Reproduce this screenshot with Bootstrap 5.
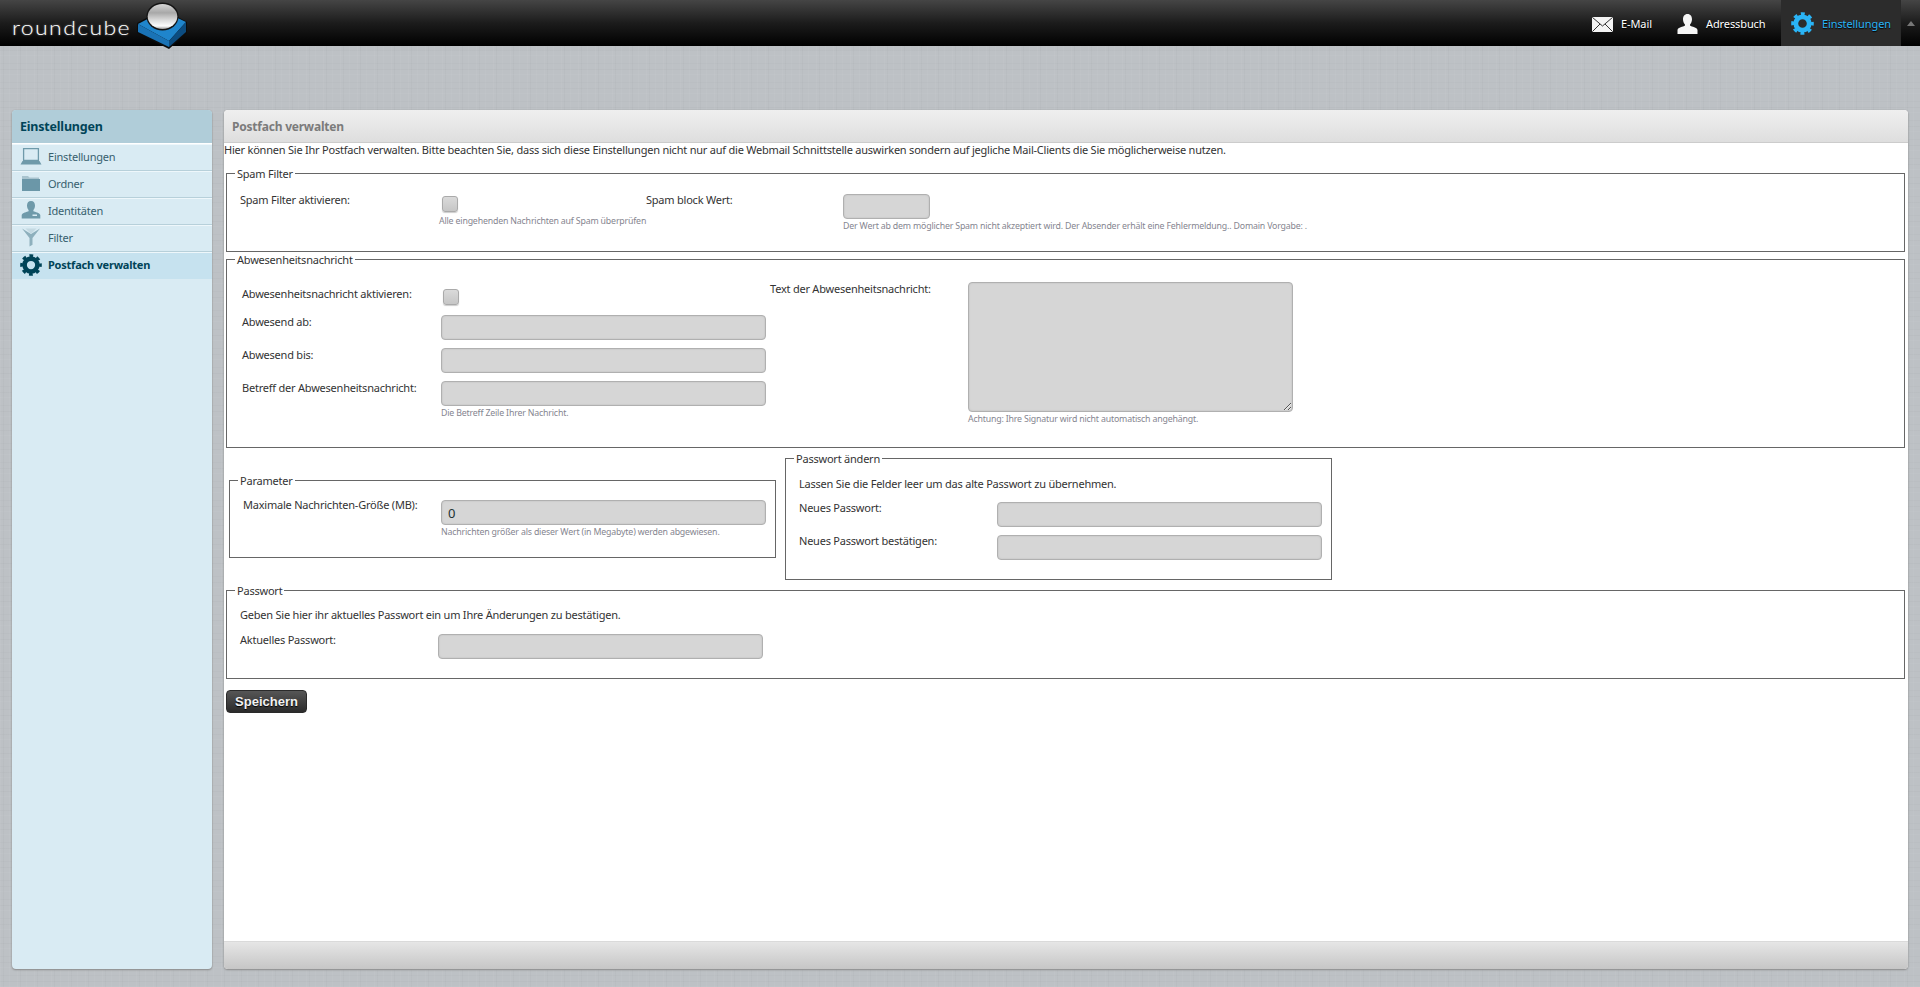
<!DOCTYPE html>
<html lang="de">
<head>
  <meta charset="UTF-8" />
  <meta name="viewport" content="width=device-width, initial-scale=1.0"/>
  <title>Roundcube - Postfach verwalten</title>
  <link href="https://cdn.jsdelivr.net/npm/bootstrap@5.3.0/dist/css/bootstrap.min.css" rel="stylesheet"/>
  <style>
    html, body { height: 100%; }
    body {
      font-family: "Noto Sans", "Open Sans", sans-serif; font-size: 11px; letter-spacing: -.22px; line-height: 15px; color: #333; overflow: hidden;
      background-color: #bdc1c5;
      background-image:
        repeating-linear-gradient(90deg, rgba(255,255,255,.04) 0 1px, transparent 1px 3px, rgba(0,0,0,.02) 3px 4px, transparent 4px 9px, rgba(255,255,255,.03) 9px 10px, transparent 10px 17px),
        repeating-linear-gradient(0deg, rgba(255,255,255,.035) 0 1px, transparent 1px 5px, rgba(0,0,0,.02) 5px 6px, transparent 6px 11px, rgba(0,0,0,.015) 11px 12px, transparent 12px 19px);
    }
    .topbar { height: 46px; background: linear-gradient(#454545, #1c1c1c 50%, #000); }
    .brand { padding-left: 12px; height: 46px; }
    .brand-text { font-family: Lato, sans-serif; font-weight: 300; font-size: 20px; letter-spacing: 1.2px; color: #fff; line-height: 46px; width: 125px; padding-top: 4px; transform: scaleX(1.15); transform-origin: left center; text-shadow: 0 0 2px rgba(255,255,255,.5); }
    .brand-cube { width: 50px; height: 50px; position: relative; z-index: 2; }
    .top-link { height: 46px; padding-top: 1px; color: #fff; letter-spacing: -.1px; line-height: 46px; text-decoration: none; text-shadow: 0 1px 1px #000; }
    .top-link svg { flex: none; }
    .link-mail { width: 85px; gap: 8px; }
    .link-mail svg { margin-top: 2px; }
    .link-addr { width: 104px; gap: 8px; }
    .link-set { width: 119px; padding-left: 10px; gap: 8px; background: #2c2c2c; color: #2ab4f6; }
    .top-toggle { width: 20px; height: 46px; border-left: 1px solid #2a2a2a; }
    .top-caret { width: 0; height: 0; border: 4px solid transparent; border-top: 0; border-bottom: 5px solid #777; }
    .shell { height: calc(100% - 46px); padding: 64px 12px 18px; gap: 12px; }
    .side-panel { width: 200px; background: #d9ebf3; border-radius: 4px; box-shadow: 0 1px 2px #888, 0 0 1px #999; overflow: hidden; }
    .side-title { height: 34px; line-height: 33px; padding-left: 8px; font-size: 12.5px; letter-spacing: -.2px; font-weight: 700; color: #004458; background: #b0cdd9; border-bottom: 1px solid #fff; }
    .side-item.list-group-item { display: flex; align-items: center; gap: 6px; height: 27px; padding: 0 0 3px 8px; color: #37606e; background: #d9ebf3; border: 0; border-bottom: 1px solid #b7d0da; border-top: 1px solid #eef7fb; border-radius: 0; }
    .side-item.sel { background: #c6e2ef; color: #004458; font-weight: 700; }
    .side-item svg { width: 22px; height: 22px; flex: none; }
    .main-panel { flex: 1; background: #fff; border-radius: 4px; box-shadow: 0 1px 2px #888, 0 0 1px #999; overflow: hidden; }
    .main-head { height: 33px; line-height: 33px; padding-left: 8px; font-size: 12px; font-weight: 700; color: #7b7b7b; background: linear-gradient(#efefef, #dedede); border-bottom: 1px solid #ccc; }
    .main-body { flex: 1; padding: 0 3px 0 0; }
    .main-foot { height: 28px; background: linear-gradient(#e6e6e6, #c6c6c6); border-top: 1px solid #dadada; }
    .intro-line { height: 16px; line-height: 14px; }
    .rc-box { border: 1px solid #666; border-radius: 0; padding: 0; margin: 0; min-width: 0; }
    .rc-box legend { float: none; width: auto; font-size: 11px; line-height: 15px; padding: 0 2px; margin: 0 0 0 8px; color: #333; }
    .box-spam { margin: 7px 0 0 2px; height: 86px; }
    .box-away { margin: 0 0 0 2px; height: 196px; }
    .box-param { margin-top: 25px; width: 547px; height: 85px; }
    .box-pass { margin: 3px 0 0 9px; width: 547px; height: 129px; }
    .box-cur { margin: 3px 0 0 2px; height: 96px; }
    .param-row { margin-left: 5px; }
    .rc-lbl { flex: none; line-height: 15px; padding-top: 9px; }
    .rc-help { font-size: 8.8px; letter-spacing: -.18px; line-height: 12px; color: #85858f; white-space: nowrap; }
    .rc-input.form-control { height: 25px; min-height: 0; padding: 0 6px; font-size: 13px; color: #233; background: #d6d6d6; border: 1px solid #b0b0b0; border-radius: 4px; box-shadow: inset 0 0 2px #bbb; }
    .rc-area.form-control { width: 325px; height: 130px; margin-top: 1px; padding: 4px 6px; background: #d6d6d6; border: 1px solid #b0b0b0; border-radius: 4px; box-shadow: inset 0 0 2px #bbb; }
    .rc-check.form-check-input { width: 16px; height: 16px; margin: 0; background: linear-gradient(#dadada, #c6c6c6); border: 1px solid #aaa; border-radius: 3px; box-shadow: 0 1px 1px #ccc; }
    .w-325 { width: 325px; }
    .spam-row { padding: 2px 0 0 13px; }
    .spam-a { width: 199px; }
    .spam-b { width: 207px; padding-top: 13px; }
    .spam-b .rc-check { margin-left: 3px; display: block; }
    .spam-b .rc-help { margin-top: 3px; }
    .spam-c { width: 197px; }
    .spam-d .rc-input { width: 87px; }
    .spam-d { padding-top: 11px; }
    .rc-help-top { margin-top: 1px; }
    .away-left { width: 543px; padding: 17px 0 0 15px; }
    .away-lbl.rc-lbl { width: 199px; padding-top: 0; margin-top: -1px; }
    .away-row { height: 33px; }
    .away-first { height: 31px; }
    .away-first .rc-lbl { margin-top: 2px; }
    .away-first .rc-check { margin: 5px 0 0 2px; }
    .away-right { padding-top: 14px; }
    .away-text-lbl { width: 198px; }
    .param-inner { padding: 9px 0 0 13px; }
    .param-lbl.rc-lbl { width: 198px; padding-top: 0; }
    .param-field { margin-top: 3px; }
    .pass-inner { padding: 10px 0 0 13px; }
    .pass-row { height: 33px; }
    .pass-text { height: 26px; }
    .pass-lbl.rc-lbl { width: 198px; padding-top: 0; margin-top: -2px; }
    .cur-inner { padding: 9px 0 0 13px; }
    .cur-text { height: 27px; }
    .rc-save.btn { display: block; margin: 11px 0 0 2px; width: 81px; height: 23px; padding: 0; font-family: "Liberation Sans", Arial, sans-serif; font-size: 13px; letter-spacing: 0; line-height: 20px; font-weight: 700; color: #f2f2f2; background: linear-gradient(#565656, #2b2b2b); border: 1px solid #2a2a2a; border-radius: 4px; text-shadow: 0 1px 1px #000; }
  </style>
</head>
<body>
  <svg width="0" height="0" class="d-block">
    <symbol id="gear-sym" viewBox="0 0 24 24">
      <circle cx="12" cy="12" r="7" fill="none" stroke="currentColor" stroke-width="5"/>
      <circle cx="12" cy="12" r="10" fill="none" stroke="currentColor" stroke-width="3.6" stroke-dasharray="4 3.854" stroke-dashoffset="2"/>
    </symbol>
  </svg>

  <header class="topbar d-flex justify-content-between">
    <div class="brand d-flex">
      <span class="brand-text">roundcube</span>
      <svg class="brand-cube" viewBox="0 0 50 50">
        <defs>
          <linearGradient id="ball" x1="0" y1="0" x2="0" y2="1">
            <stop offset="0" stop-color="#d6d6d6"/><stop offset=".35" stop-color="#a8a8a8"/><stop offset=".65" stop-color="#dcdcdc"/><stop offset=".88" stop-color="#fdfdfd"/><stop offset="1" stop-color="#9a9a9a"/>
          </linearGradient>
        </defs>
        <polygon points="0,23 26,9 50,22 50,33 32,49 0,33" fill="#0c0c0c"/>
        <polygon points="1,24 26,11 49,22 32,41" fill="#1f85cc"/>
        <polygon points="1,24 32,41 32,47 1,32" fill="#1a73b6"/>
        <polygon points="32,41 49,22 49,32 32,47" fill="#0c4c80"/>
        <ellipse cx="25.500" cy="16.500" rx="16" ry="14" fill="#141414"/>
        <ellipse cx="25.500" cy="16.500" rx="14.800" ry="12.500" fill="url(#ball)"/>
      </svg>
    </div>
    <nav class="d-flex">
      <a class="top-link link-mail d-flex align-items-center" href="#">
        <svg width="21" height="15" viewBox="0 0 21 15"><rect width="21" height="15" fill="#f4f4f4"/><path d="M.3.300 10.500 9 20.700.300M.3 14.700 8 7M20.700 14.700 13 7" fill="none" stroke="#333" stroke-width="1"/></svg>
        E-Mail
      </a>
      <a class="top-link link-addr d-flex align-items-center" href="#">
        <svg width="21" height="20" viewBox="0 0 21 20"><path fill="#f6f6f6" d="M10.500 0c3 0 4.500 2.300 4.500 5.200 0 2.200-.9 4-1.900 5.100v1.400c1.700 1 7 1.400 7.400 4.300V20H.500v-4c.4-2.900 5.700-3.300 7.400-4.300v-1.400C6.900 9.200 6 7.400 6 5.200 6 2.300 7.500 0 10.500 0z"/></svg>
        Adressbuch
      </a>
      <a class="top-link link-set d-flex align-items-center" href="#">
        <svg width="23" height="23"><use href="#gear-sym"/></svg>
        Einstellungen
      </a>
      <div class="top-toggle d-flex align-items-center justify-content-center"><span class="top-caret"></span></div>
    </nav>
  </header>

  <div class="shell d-flex">
    <aside class="side-panel">
      <div class="side-title">Einstellungen</div>
      <div class="list-group list-group-flush">
        <a class="list-group-item side-item" href="#">
          <svg viewBox="0 0 22 22"><path fill="none" stroke="#6f9aaa" stroke-width="1.300" d="M3.600 3.600h14.800v11.800H3.600z"/><path fill="#6f9aaa" d="M2.500 16h17l2 3.500H.5z"/></svg>
          Einstellungen
        </a>
        <a class="list-group-item side-item" href="#">
          <svg viewBox="0 0 22 22"><path fill="#a9c4cf" d="M2 4h6l1.500 1.500H19v1.500H2z"/><path fill="#6b97a8" d="M2 7h18v12H2z"/></svg>
          Ordner
        </a>
        <a class="list-group-item side-item" href="#">
          <svg viewBox="0 0 22 22"><path fill="#6f9aaa" d="M11 2c2.700 0 4 2 4 4.500 0 2-.8 3.500-1.600 4.500v1.300c1.600.9 6.300 1.300 6.900 3.700v3.500H1.700V16c.6-2.400 5.300-2.800 6.900-3.700V11C7.800 10 7 8.500 7 6.500 7 4 8.300 2 11 2z"/><rect x="12.500" y="15.500" width="4.500" height="1.500" fill="#d9ebf3"/></svg>
          Identitäten
        </a>
        <a class="list-group-item side-item" href="#">
          <svg viewBox="0 0 22 22"><path fill="#8eb0bd" d="M2 2.500 9.500 12v8.500l3-1.800V12L20 2.500 11 8z"/><path fill="#c4d9e2" d="M5.500 2.500h11L11 8z"/></svg>
          Filter
        </a>
        <a class="list-group-item side-item sel" href="#">
          <svg><use href="#gear-sym"/></svg>
          Postfach verwalten
        </a>
      </div>
    </aside>

    <main class="main-panel d-flex flex-column">
      <div class="main-head">Postfach verwalten</div>
      <div class="main-body">
        <div class="intro-line">Hier können Sie Ihr Postfach verwalten. Bitte beachten Sie, dass sich diese Einstellungen nicht nur auf die Webmail Schnittstelle auswirken sondern auf jegliche Mail-Clients die Sie möglicherweise nutzen.</div>

        <fieldset class="rc-box box-spam">
          <legend>Spam Filter</legend>
          <div class="spam-row d-flex">
            <div class="rc-lbl spam-a">Spam Filter aktivieren:</div>
            <div class="spam-b">
              <input type="checkbox" class="form-check-input rc-check"/>
              <div class="rc-help">Alle eingehenden Nachrichten auf Spam überprüfen</div>
            </div>
            <div class="rc-lbl spam-c">Spam block Wert:</div>
            <div class="spam-d">
              <input type="text" class="form-control rc-input"/>
              <div class="rc-help rc-help-top">Der Wert ab dem möglicher Spam nicht akzeptiert wird. Der Absender erhält eine Fehlermeldung.. Domain Vorgabe: .</div>
            </div>
          </div>
        </fieldset>

        <fieldset class="rc-box box-away">
          <legend>Abwesenheitsnachricht</legend>
          <div class="d-flex">
            <div class="away-left">
              <div class="d-flex away-first">
                <div class="rc-lbl away-lbl">Abwesenheitsnachricht aktivieren:</div>
                <input type="checkbox" class="form-check-input rc-check"/>
              </div>
              <div class="d-flex away-row">
                <div class="rc-lbl away-lbl">Abwesend ab:</div>
                <input type="text" class="form-control rc-input w-325"/>
              </div>
              <div class="d-flex away-row">
                <div class="rc-lbl away-lbl">Abwesend bis:</div>
                <input type="text" class="form-control rc-input w-325"/>
              </div>
              <div class="d-flex">
                <div class="rc-lbl away-lbl">Betreff der Abwesenheitsnachricht:</div>
                <div>
                  <input type="text" class="form-control rc-input w-325"/>
                  <div class="rc-help rc-help-top">Die Betreff Zeile Ihrer Nachricht.</div>
                </div>
              </div>
            </div>
            <div class="away-right d-flex">
              <div class="away-text-lbl">Text der Abwesenheitsnachricht:</div>
              <div>
                <textarea class="form-control rc-area"></textarea>
                <div class="rc-help rc-help-top">Achtung: Ihre Signatur wird nicht automatisch angehängt.</div>
              </div>
            </div>
          </div>
        </fieldset>

        <div class="d-flex align-items-start param-row">
          <fieldset class="rc-box box-param">
            <legend>Parameter</legend>
            <div class="d-flex param-inner">
              <div class="rc-lbl param-lbl">Maximale Nachrichten-Größe (MB):</div>
              <div class="param-field">
                <input type="text" class="form-control rc-input w-325" value="0"/>
                <div class="rc-help rc-help-top">Nachrichten größer als dieser Wert (in Megabyte) werden abgewiesen.</div>
              </div>
            </div>
          </fieldset>
          <fieldset class="rc-box box-pass">
            <legend>Passwort ändern</legend>
            <div class="pass-inner">
              <div class="pass-text">Lassen Sie die Felder leer um das alte Passwort zu übernehmen.</div>
              <div class="d-flex pass-row">
                <div class="rc-lbl pass-lbl">Neues Passwort:</div>
                <input type="password" class="form-control rc-input w-325"/>
              </div>
              <div class="d-flex pass-row">
                <div class="rc-lbl pass-lbl">Neues Passwort bestätigen:</div>
                <input type="password" class="form-control rc-input w-325"/>
              </div>
            </div>
          </fieldset>
        </div>

        <fieldset class="rc-box box-cur">
          <legend>Passwort</legend>
          <div class="cur-inner">
            <div class="cur-text">Geben Sie hier ihr aktuelles Passwort ein um Ihre Änderungen zu bestätigen.</div>
            <div class="d-flex">
              <div class="rc-lbl pass-lbl">Aktuelles Passwort:</div>
              <input type="password" class="form-control rc-input w-325"/>
            </div>
          </div>
        </fieldset>

        <button type="button" class="btn rc-save">Speichern</button>
      </div>
      <div class="main-foot"></div>
    </main>
  </div>

  <script src="https://cdn.jsdelivr.net/npm/bootstrap@5.3.0/dist/js/bootstrap.bundle.min.js"></script>
</body>
</html>
